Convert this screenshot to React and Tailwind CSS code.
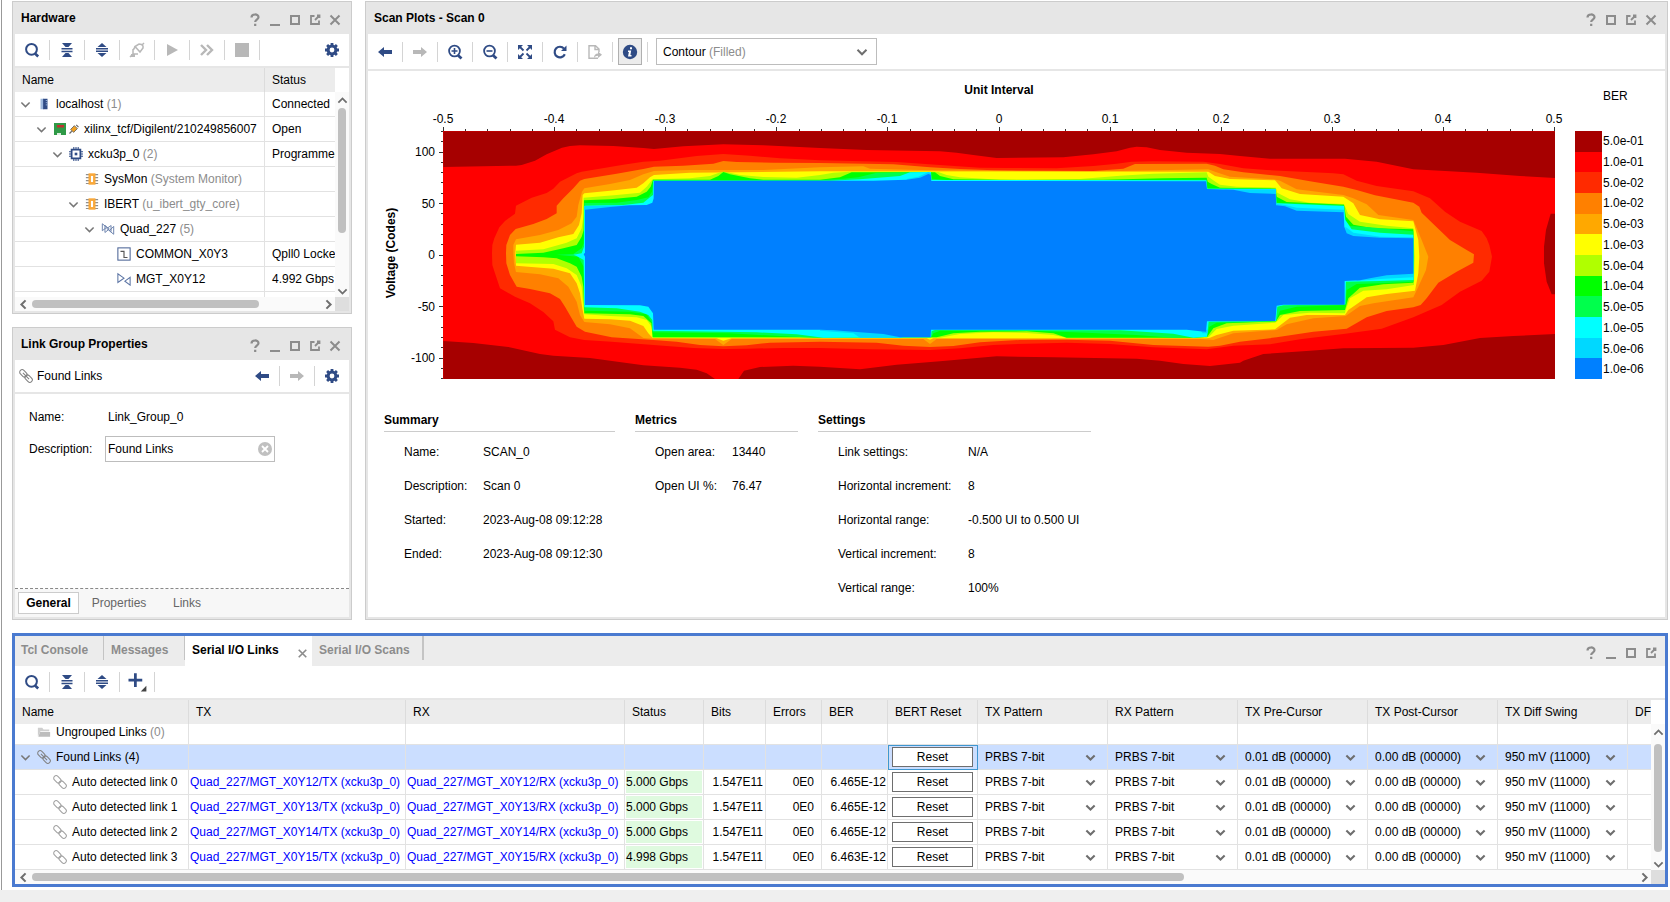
import React, { useState } from "react";

const NAVY = "#2f4b85";
const GREY = "#b8b8b8";

/* ---------- small icons ---------- */

const Svg = ({ size = 16, children, className = "" }) => (
  <svg width={size} height={size} viewBox="0 0 16 16" fill="none" className={`shrink-0 ${className}`} aria-hidden="true">
    {children}
  </svg>
);

const SearchIcon = () => (
  <Svg>
    <circle cx="7.5" cy="7.3" r="5.4" stroke={NAVY} strokeWidth="2" />
    <path d="M11 11.5l3.2 3" stroke={NAVY} strokeWidth="2.6" />
  </Svg>
);

const CollapseIcon = () => (
  <Svg>
    <path d="M3 1h10l-3.5 4h-3zM3 15h10l-3.5-4h-3zM2.5 6h11v1.400h-11zM2.5 8.800h11v1.400h-11z" fill={NAVY} />
  </Svg>
);

const ExpandIcon = () => (
  <Svg>
    <path d="M8 1l4.500 4h-9zM8 15l4.500-4h-9zM2 6h12v1.500H2zM2 8.500h12V10H2z" fill={NAVY} />
  </Svg>
);

const PlugIcon = () => (
  <Svg>
    <path d="M1 15l3-3M4 7v5h5M6 4.500l5 5.500 3-4V4l-1.500-1.500L10 2zM13 3l2-2M4.500 7.500L6 5" stroke={GREY} strokeWidth="1.500" />
    <path d="M2 12h4v3H2z" fill={GREY} />
  </Svg>
);

const PlayIcon = () => (
  <Svg>
    <path d="M3 2l11 6-11 6z" fill={GREY} />
  </Svg>
);

const FastForwardIcon = () => (
  <Svg>
    <path d="M2 3l5 5-5 5M8 3l5 5-5 5" stroke={GREY} strokeWidth="2.400" />
  </Svg>
);

const StopIcon = () => (
  <Svg>
    <path d="M1 1h14v14H1z" fill={GREY} />
  </Svg>
);

const GearIcon = () => (
  <Svg>
    <circle cx="8" cy="8" r="3.900" stroke={NAVY} strokeWidth="3" />
    <path
      d="M8 1v2.500M8 12.500V15M1 8h2.500M12.500 8H15M3.100 3.100l1.700 1.700M11.200 11.200l1.700 1.700M3.100 12.900l1.700-1.700M11.200 4.800l1.700-1.700"
      stroke={NAVY}
      strokeWidth="2.800"
    />
  </Svg>
);

const LeftArrowIcon = () => (
  <Svg>
    <path d="M1 8l6-5v3h8v4H7v3z" fill={NAVY} />
  </Svg>
);

const RightArrowIcon = () => (
  <Svg>
    <path d="M15 8L9 3v3H1v4h8v3z" fill={GREY} />
  </Svg>
);

const ZoomIcon = ({ plus }) => (
  <Svg>
    <circle cx="7.500" cy="7" r="5.400" stroke={NAVY} strokeWidth="1.800" />
    <path d="M11 11.300l3.500 3.200" stroke={NAVY} strokeWidth="2.800" />
    <path d={plus ? "M4.500 7h6M7.500 4v6" : "M4.500 7h6"} stroke={NAVY} strokeWidth="1.600" />
  </Svg>
);

const FitIcon = () => (
  <Svg>
    <path d="M1 1h5L1 6zM15 1v5l-5-5zM1 15v-5l5 5zM15 15h-5l5-5z" fill={NAVY} />
    <path d="M3 3l3.500 3.500M13 3L9.500 6.500M3 13l3.500-3.500M13 13L9.500 9.500" stroke={NAVY} strokeWidth="1.800" />
  </Svg>
);

const ReloadIcon = () => (
  <Svg>
    <path d="M12.800 10.200A5.300 5.300 0 1 1 12 4.600" stroke={NAVY} strokeWidth="2.200" />
    <path d="M14.500 1.500v5.500H9z" fill={NAVY} />
  </Svg>
);

const ExportIcon = () => (
  <Svg>
    <path d="M11 14.300H2V1.700h6.500L12 5v3M8 2v3.500h4" stroke={GREY} strokeWidth="1.400" />
    <path d="M7 14c0-3 1.500-4.500 4-4.500V7.500l4 3.200-4 3.300v-2.200c-1.800 0-3 .7-4 2.200z" fill={GREY} />
  </Svg>
);

const InfoIcon = () => (
  <Svg>
    <circle cx="8" cy="8" r="7.200" fill={NAVY} />
    <path d="M8 3.200h2v2H8zM6 6.500h3.200L8.400 11h1.100v1.500H6L6.900 8H6z" fill="#fff" />
  </Svg>
);

const PlusIcon = () => (
  <Svg size={20}>
    <path d="M6.700 1v11M1.200 6.500h11" stroke={NAVY} strokeWidth="2.200" />
    <path d="M15.500 11v4.500H11z" fill="#444" />
  </Svg>
);

const Chevron = ({ dir = "down", color = "#6e6e6e", size = 10, width = 2.4 }) => {
  const paths = {
    down: "M2 5l6 6 6-6",
    up: "M2 11l6-6 6 6",
    left: "M11 2L5 8l6 6",
    right: "M5 2l6 6-6 6",
  };
  return (
    <Svg size={size}>
      <path d={paths[dir]} stroke={color} strokeWidth={width} />
    </Svg>
  );
};

const LinkIcon = ({ bold }) => (
  <Svg size={14}>
    <g transform="rotate(45 8 8)" stroke={bold ? "#808080" : "#a0a0a0"} strokeWidth="1.200">
      <rect x="-1" y="5.200" width="9.500" height="5.600" rx="2.800" />
      <rect x="7.500" y="5.200" width="9.500" height="5.600" rx="2.800" />
      {bold && <path d="M3 8h10" />}
    </g>
  </Svg>
);

const FolderIcon = () => (
  <Svg size={14}>
    <path d="M1 13V3h5l1.500 2H14v2H4z" fill="#cfcfcf" />
    <path d="M3.500 8H15v5.500H1.500z" fill="#bdbdbd" />
  </Svg>
);

const ServerIcon = () => (
  <Svg size={14}>
    <path d="M4 2h4v12H4z" fill="#9db8dd" />
    <path d="M7 2h5v12H7z" fill="#2f4b85" />
    <path d="M10 4h2M10 6.500h2M10 9h2" stroke="#9db8dd" />
  </Svg>
);

const BoardIcon = () => (
  <span className="flex items-center">
    <Svg>
      <path d="M2 2h12v12H2z" fill="#2f9a47" />
      <path d="M5 4h7v2.500H5z" fill="#c23030" />
      <path d="M5 12h4v2H5z" fill="#dff0e2" />
    </Svg>
    <Svg size={12}>
      <path d="M3.500 8.500l5-5 4 4-5 5z" fill="#f0a020" stroke="#666" strokeWidth="1.200" />
      <path d="M2 14l3-3M11 2.500l3 3" stroke="#666" strokeWidth="1.600" />
    </Svg>
  </span>
);

const ChipIcon = () => (
  <Svg size={14}>
    <rect x="3" y="3" width="10" height="10" stroke={NAVY} strokeWidth="2" />
    <rect x="6.500" y="6.500" width="3" height="3" fill={NAVY} />
    <path
      d="M5.500 0v3M8 0v3M10.500 0v3M5.500 13v3M8 13v3M10.500 13v3M0 5.500h3M0 8h3M0 10.500h3M13 5.500h3M13 8h3M13 10.500h3"
      stroke={NAVY}
      strokeWidth="1.200"
    />
  </Svg>
);

const CoreIcon = () => (
  <Svg size={14}>
    <path d="M1 3h14M1 6.400h14M1 9.800h14M1 13.200h14" stroke="#8f8f8f" strokeWidth="1.300" />
    <path d="M4 1.500h8v13H4z" fill="#f9a83a" />
    <path d="M6.800 4.500h2.400v7H6.800z" fill="#fff" />
  </Svg>
);

const QuadIcon = () => (
  <Svg size={14}>
    <path d="M1.500 2v8l5-4zM4.500 4v8l5-4zM11.500 4v7l-5-3.500zM14.500 5v9l-5-4z" stroke="#6b82ad" strokeWidth="1.100" />
  </Svg>
);

const CommonIcon = () => (
  <Svg size={14}>
    <rect x="1" y="1" width="14" height="14" stroke="#4c6496" strokeWidth="1.200" />
    <path d="M4 5h4v7h4" stroke="#555" strokeWidth="1.300" />
  </Svg>
);

const GtIcon = () => (
  <Svg size={14}>
    <path d="M1 2v10l7-5zM15 6v9l-6-4.500z" stroke="#5b74a4" strokeWidth="1.200" />
  </Svg>
);

/* ---------- panel chrome ---------- */

const windowIcons = {
  Help: (
    <path d="M4.500 5.500C4.500 1.500 11.500 1.500 11.500 5.300c0 2.200-3.300 2.400-3.300 4.700M8.200 11.800V14" stroke="#8c8c8c" strokeWidth="2.200" />
  ),
  Minimize: <path d="M3 13h10" stroke="#8c8c8c" strokeWidth="2" />,
  Maximize: <path d="M4 4h8v8H4z" stroke="#8c8c8c" strokeWidth="2" />,
  Float: <path d="M7.500 4H4v8h8V8.500M8 8l4-4M10 3.500h2.500V6" stroke="#8c8c8c" strokeWidth="1.800" />,
  Close: <path d="M3.500 3.500l9 9M12.500 3.500l-9 9" stroke="#8c8c8c" strokeWidth="2" />,
};

const WindowButtons = ({ names }) => (
  <div className="flex items-center pr-1 pt-1">
    {names.map((name) => (
      <button key={name} type="button" aria-label={name} className="flex w-5 justify-center">
        <Svg>{windowIcons[name]}</Svg>
      </button>
    ))}
  </div>
);

const Panel = ({ title, buttons, className = "", children }) => (
  <section className={`flex flex-col border border-[#cccccc] bg-[#e6e6e6] px-0.5 pb-0.5 ${className}`}>
    <header className="flex h-8 shrink-0 items-center justify-between pl-1.5">
      <h2 className="font-bold">{title}</h2>
      <WindowButtons names={buttons} />
    </header>
    {children}
  </section>
);

const Sep = () => <span className="h-5 w-px shrink-0 bg-[#d4d4d4]" />;

const Tool = ({ label, children }) => (
  <button type="button" aria-label={label} className="flex w-[34px] shrink-0 items-center justify-center">
    {children}
  </button>
);

const Tools = ({ items }) =>
  items.map(([label, icon]) => (
    <React.Fragment key={label}>
      <Tool label={label}>{icon}</Tool>
      <Sep />
    </React.Fragment>
  ));

const HScroll = ({ thumb }) => (
  <div className="flex h-3.5 bg-[#fafafa]">
    <button type="button" aria-label="Scroll left" className="flex w-[17px] shrink-0 items-center justify-center">
      <Chevron dir="left" size={11} width={3} />
    </button>
    <div className="flex min-w-0 flex-1 items-center">
      <div className={`h-2 rounded-full bg-[#c0c0c0] ${thumb}`} />
    </div>
    <button type="button" aria-label="Scroll right" className="flex w-3.5 shrink-0 items-center justify-center">
      <Chevron dir="right" size={11} width={3} />
    </button>
    <div className="w-3.5 shrink-0 bg-[#dedede]" />
  </div>
);

const VScroll = ({ thumb }) => (
  <div className="flex w-3.5 shrink-0 flex-col items-center bg-white pt-6">
    <div className="flex w-full flex-1 flex-col items-center bg-[#fafafa]">
      <button type="button" aria-label="Scroll up" className="flex h-4 items-center">
        <Chevron dir="up" size={11} width={2.6} />
      </button>
      <div className="flex w-2 flex-1 flex-col">
        <div className={`w-2 rounded-full bg-[#c0c0c0] ${thumb}`} />
      </div>
      <button type="button" aria-label="Scroll down" className="flex h-3 items-center">
        <Chevron dir="down" size={11} width={2.6} />
      </button>
    </div>
  </div>
);

const indents = ["pl-[3px]", "pl-[19px]", "pl-[35px]", "pl-[51px]", "pl-[67px]", "pl-[83px]"];

const TreeCell = ({ level, open, icon, name, note, noteClass = "text-[#8c8c8c]" }) => (
  <div className={`flex items-center gap-1 ${indents[level]}`}>
    <span className="flex w-3.5 shrink-0 justify-center">{open && <Chevron color="#777" size={11} width={2.2} />}</span>
    <span className="flex min-w-4 shrink-0 justify-center">{icon}</span>
    <span>
      {name} {note && <span className={noteClass}>{note}</span>}
    </span>
  </div>
);

/* ---------- hardware ---------- */

const hardwareRows = [
  { level: 0, open: true, icon: <ServerIcon />, name: "localhost", note: "(1)", status: "Connected" },
  { level: 1, open: true, icon: <BoardIcon />, name: "xilinx_tcf/Digilent/210249856007", status: "Open" },
  { level: 2, open: true, icon: <ChipIcon />, name: "xcku3p_0", note: "(2)", status: "Programmed" },
  { level: 3, icon: <CoreIcon />, name: "SysMon", note: "(System Monitor)", status: "" },
  { level: 3, open: true, icon: <CoreIcon />, name: "IBERT", note: "(u_ibert_gty_core)", status: "" },
  { level: 4, open: true, icon: <QuadIcon />, name: "Quad_227", note: "(5)", status: "" },
  { level: 5, icon: <CommonIcon />, name: "COMMON_X0Y3", status: "Qpll0 Locked" },
  { level: 5, icon: <GtIcon />, name: "MGT_X0Y12", status: "4.992 Gbps" },
];

const HardwarePanel = () => (
  <Panel title="Hardware" buttons={["Help", "Minimize", "Maximize", "Float", "Close"]}>
    <div className="mb-0.5 flex h-8 items-center bg-white">
      <Tools
        items={[
          ["Search", <SearchIcon />],
          ["Collapse all", <CollapseIcon />],
          ["Expand all", <ExpandIcon />],
          ["Auto connect", <PlugIcon />],
          ["Run", <PlayIcon />],
          ["Run immediate", <FastForwardIcon />],
          ["Stop", <StopIcon />],
        ]}
      />
      <div className="ml-auto flex">
        <Tool label="Settings">
          <GearIcon />
        </Tool>
      </div>
    </div>
    <div className="flex h-[229px] bg-white">
      <div className="min-w-0 flex-1 overflow-hidden">
        <table className="w-full table-fixed border-separate border-spacing-0 whitespace-nowrap">
          <thead>
            <tr className="h-6 bg-[#ececec] text-left">
              <th className="w-[250px] border-r border-[#dcdcdc] pl-[7px] font-normal">Name</th>
              <th className="pl-[7px] font-normal">Status</th>
            </tr>
          </thead>
          <tbody>
            {hardwareRows.map((row) => (
              <tr key={row.name} className="h-[25px]">
                <td className="overflow-hidden border-r border-b border-[#e2e2e2] p-0">
                  <TreeCell {...row} />
                </td>
                <td className="overflow-hidden border-b border-[#e2e2e2] p-0 pl-[7px]">{row.status}</td>
              </tr>
            ))}
            <tr className="h-[25px]">
              <td className="border-r border-[#e2e2e2]" />
              <td />
            </tr>
          </tbody>
        </table>
      </div>
      <VScroll thumb="h-[125px]" />
    </div>
    <HScroll thumb="w-[227px]" />
  </Panel>
);

/* ---------- link group properties ---------- */

const PropertiesPanel = () => {
  const [description, setDescription] = useState("Found Links");

  return (
    <Panel title="Link Group Properties" buttons={["Help", "Minimize", "Maximize", "Float", "Close"]} className="flex-1">
      <div className="mb-0.5 flex h-8 shrink-0 items-center bg-white">
        <div className="flex flex-1 items-center gap-1 pl-1">
          <LinkIcon bold />
          <span>Found Links</span>
        </div>
        <Tools items={[["Back", <LeftArrowIcon />], ["Forward", <RightArrowIcon />]]} />
        <Tool label="Settings">
          <GearIcon />
        </Tool>
      </div>
      <div className="flex flex-1 flex-col gap-2 border-b border-dashed border-[#888] bg-white px-3.5 pt-3">
        <div className="flex h-[22px] items-center">
          <span className="w-[79px]">Name:</span>
          <span>Link_Group_0</span>
        </div>
        <div className="flex items-center">
          <label htmlFor="description" className="w-[76px]">
            Description:
          </label>
          <div className="flex h-[26px] w-[170px] items-center border border-[#bdbdbd] pr-px pl-0.5">
            <input
              id="description"
              type="text"
              value={description}
              onChange={(e) => setDescription(e.target.value)}
              className="min-w-0 flex-1 outline-none"
            />
            <button type="button" aria-label="Clear description" onClick={() => setDescription("")}>
              <Svg>
                <circle cx="8" cy="8" r="7" fill="#c0c0c0" />
                <path d="M5 5l6 6M11 5l-6 6" stroke="#fff" strokeWidth="1.800" />
              </Svg>
            </button>
          </div>
        </div>
      </div>
      <div className="flex h-7 shrink-0 items-center bg-[#f7f7f7] pl-[3px] text-[#666]">
        <button type="button" className="h-[22px] w-[61px] border border-[#cccccc] bg-white font-bold text-black">
          General
        </button>
        <button type="button" className="w-20">
          Properties
        </button>
        <button type="button" className="w-14">
          Links
        </button>
      </div>
    </Panel>
  );
};

/* ---------- eye scan ---------- */

// Contour outlines, low to high confidence, drawn in thirds of a pixel.
const contours = [
  {
    fill: "#a60000",
    points: [
      "40,34 40,141 258,137 275,135 315,122 350,103 396,83 420,78 450,76 550,78 640,84 672,87 760,79 880,73 1000,76 1170,84 1310,90 1530,94 1580,98 1630,105 1700,114 1900,112 1990,103 2060,94 2100,83 2120,80 2150,82 2190,90 2270,98 2370,102 2430,108 2520,116 2745,116 2840,125 2950,148 3140,158 3270,168 3375,174 3375,34",
      "40,663 130,669 235,681 330,702 370,707 480,714 640,736 750,743 800,749 830,760 855,777 40,777",
      "925,777 942,752 990,741 1090,737 1170,740 1290,748 1400,734 1530,724 1700,709 1870,712 2120,716 2190,722 2260,732 2340,738 2430,728 2440,722 2500,702 2640,692 2740,685 2950,683 3040,675 3150,654 3250,648 3375,642 3375,777",
      "3375,281 3362,281 3348,330 3342,380 3342,430 3350,485 3365,523 3375,523",
    ],
  },
  {
    fill: "#ff2a00",
    points: [
      "186,400 187,375 193,355 208,322 225,303 255,281 258,257 305,233 350,219 370,206 390,185 440,160 455,155 580,134 640,125 690,122 800,108 880,102 960,107 1050,115 1170,121 1400,126 1540,136 1650,143 1730,144 1880,145 1990,138 2060,131 2105,125 2170,124 2320,125 2370,132 2440,145 2510,150 2710,160 2740,163 2780,182 2840,198 2950,214 3000,235 3045,275 3090,305 3155,333 3170,355 3178,375 3186,410 3178,455 3155,482 3090,515 3035,555 2950,592 2855,626 2740,642 2610,658 2520,673 2410,677 2330,688 2170,682 2040,672 1910,668 1790,671 1690,675 1590,685 1500,690 1320,688 1170,684 1060,684 950,686 880,687 790,684 700,677 545,665 463,660 420,652 375,629 370,604 340,576 300,550 255,530 210,505 195,460 187,435",
    ],
  },
  {
    fill: "#ff8000",
    points: [
      "228,400 229,375 240,345 257,327 310,312 350,297 380,280 380,257 400,235 430,205 450,182 463,177 560,161 640,147 672,140 760,137 850,131 880,123 920,126 1030,128 1170,129 1390,133 1500,142 1590,147 1690,151 1990,153 2080,146 2115,132 2330,131 2355,137 2380,148 2440,157 2550,168 2640,184 2740,200 2780,210 2835,226 2950,248 2968,260 2975,278 3010,312 3060,360 3110,390 3132,403 3130,428 3080,455 3025,488 2990,535 2972,555 2950,562 2870,573 2810,592 2750,626 2650,635 2540,652 2430,665 2370,677 2335,680 2170,675 2040,662 1910,659 1770,660 1650,667 1570,678 1500,681 1420,677 1340,668 1170,665 1020,668 950,676 880,679 810,675 740,665 670,660 545,652 465,635 440,620 425,595 405,560 390,537 360,520 300,507 260,500 240,465 229,430",
    ],
  },
  {
    fill: "#ffa800",
    points: [
      "250,400 250,375 258,358 330,345 385,330 425,310 440,290 445,255 456,215 463,205 540,192 600,180 640,163 672,153 780,150 1000,150 1170,142 1300,139 1320,146 1500,151 1970,155 2110,152 2335,148 2355,155 2400,170 2530,178 2550,182 2600,208 2740,225 2770,235 2810,253 2845,285 2950,300 2975,360 2995,410 2988,450 2965,500 2950,532 2830,550 2790,558 2747,588 2650,595 2570,613 2540,630 2410,640 2350,660 2310,657 1520,657 1500,672 1480,657 905,657 880,675 855,657 668,656 640,654 600,625 540,613 463,606 450,585 440,545 415,500 385,475 330,463 258,456 252,430",
    ],
  },
  {
    fill: "#ffff00",
    points: [
      "256,400 258,374 330,368 385,352 430,342 447,315 455,280 458,225 463,220 540,212 620,203 640,190 660,172 672,165 780,158 1170,154 2335,155 2355,168 2400,177 2535,181 2555,205 2610,222 2740,230 2770,250 2790,285 2850,298 2950,304 2965,360 2968,410 2965,460 2955,512 2870,522 2810,532 2755,570 2745,585 2630,585 2580,593 2535,628 2410,632 2360,645 2340,653 2330,655 1510,655 1500,659 1490,655 905,655 880,662 860,655 668,654 655,640 640,618 600,602 540,598 463,596 457,565 450,520 440,490 420,460 370,446 258,437",
    ],
  },
  {
    fill: "#b0ff00",
    points: [
      "258,392 340,388 410,368 440,355 455,325 460,290 461,233 560,225 630,218 650,200 668,178 780,175 840,168 875,155 885,155 930,165 1000,171 1100,173 1170,165 1210,158 1260,155 1500,155 1525,156 1550,165 1590,172 1710,179 1950,177 2070,167 2170,161 2330,157 2335,170 2353,183 2370,194 2420,200 2538,203 2542,218 2580,238 2640,248 2742,252 2755,282 2790,305 2870,317 2950,325 2954,410 2952,495 2870,508 2800,512 2760,535 2747,570 2745,580 2640,578 2560,585 2540,605 2535,608 2410,617 2360,627 2337,650 2330,653 1910,653 1870,645 1790,639 1690,637 1590,642 1530,653 668,653 665,620 650,600 620,592 540,588 463,583 458,540 455,500 440,465 410,445 370,432 258,430",
    ],
  },
  {
    fill: "#00ff00",
    points: [
      "258,402 340,398 400,385 440,375 455,350 461,330 462,241 540,238 620,230 650,215 662,200 669,179 840,179 865,168 880,156 900,163 960,175 1000,179 1170,179 1230,172 1265,157 1515,157 1530,168 1570,178 1770,180 2020,179 2200,175 2330,173 2333,185 2345,192 2370,203 2536,206 2540,230 2570,246 2742,254 2748,290 2770,314 2830,325 2950,328 2952,410 2950,488 2860,493 2790,503 2755,535 2745,570 2610,573 2550,585 2538,604 2390,610 2350,625 2332,650 2300,653 1910,653 1870,640 1790,634 1650,635 1570,640 1520,652 668,652 664,610 640,588 600,583 463,580 460,500 455,470 440,440 420,430 380,415 340,412 258,409",
    ],
  },
  {
    fill: "#00ff4c",
    points: [
      "380,404 430,402 455,385 461,370 463,249 560,248 620,240 655,232 666,215 670,181 1170,181 1240,176 1285,172 1340,158 1503,156 1506,176 1560,181 2020,181 2330,179 2332,205 2537,206 2541,248 2742,256 2746,300 2760,318 2820,322 2950,334 2951,485 2850,490 2780,492 2750,510 2746,555 2600,560 2550,572 2538,604 2360,608 2338,620 2331,650 2230,653 2120,645 1970,638 1810,632 1530,632 1510,640 1504,652 1150,653 1050,648 900,640 668,637 667,610 650,583 600,575 463,572 461,440 445,410",
    ],
  },
  {
    fill: "#00ffff",
    points: [
      "430,404 455,400 462,380 463,257 580,255 640,248 660,232 669,225 670,182 1200,182 1290,178 1410,168 1440,157 1503,156 1504,180 2329,181 2332,206 2537,207 2539,250 2742,258 2746,300 2765,328 2850,338 2950,344 2951,480 2850,483 2748,485 2746,553 2560,556 2542,560 2538,603 2336,605 2331,650 2290,653 2230,641 2150,636 2070,631 1515,630 1505,634 1503,652 1180,653 1100,643 980,637 668,632 667,600 655,585 630,575 560,565 463,562 461,420 440,408",
    ],
  },
  {
    fill: "#00d8ff",
    points: [
      "463,258 600,256 600,270 463,271",
      "1430,177 1465,170 1495,156 1503,160 1503,184 1430,184",
      "2380,208 2538,208 2538,224 2440,224",
      "2541,252 2565,255 2600,263 2742,269 2742,279 2590,279 2541,260",
      "2746,320 2770,338 2850,350 2950,352 2950,360 2746,360",
      "2950,455 2950,472 2850,477 2780,483 2780,455",
      "1170,629 1280,634 1360,640 1420,653 1290,653 1270,640 1170,632",
      "2310,629 2333,629 2333,640 2318,640",
    ],
  },
  {
    fill: "#0080ff",
    points: [
      "465,269 540,261 600,256 650,255 667,248 671,235 672,183 1330,182 1430,179 1470,173 1495,162 1502,164 1504,183 2328,184 2331,207 2410,209 2460,219 2537,222 2539,256 2565,259 2600,272 2741,277 2743,320 2750,340 2770,348 2850,353 2950,355 2950,461 2870,466 2820,475 2790,481 2744,483 2744,554 2560,554 2540,557 2536,603 2331,604 2328,635 2310,634 2270,629 1503,629 1502,652 1410,652 1360,642 1280,636 1210,631 1170,629 671,629 669,580 655,560 630,556 465,555 465,410 461,403 465,398",
    ],
  },
];

const legend = [
  ["5.0e-01", "#a60000"],
  ["1.0e-01", "#ff0000"],
  ["5.0e-02", "#ff2a00"],
  ["1.0e-02", "#ff8000"],
  ["5.0e-03", "#ffa800"],
  ["1.0e-03", "#ffff00"],
  ["5.0e-04", "#b0ff00"],
  ["1.0e-04", "#00ff00"],
  ["5.0e-05", "#00ff4c"],
  ["1.0e-05", "#00ffff"],
  ["5.0e-06", "#00d8ff"],
  ["1.0e-06", "#0080ff"],
];

const xTicks = Array.from({ length: 51 }, (_, i) => i);
const yTicks = Array.from({ length: 25 }, (_, i) => 120 - i * 10);
const xLabels = ["-0.5", "-0.4", "-0.3", "-0.2", "-0.1", "0", "0.1", "0.2", "0.3", "0.4", "0.5"];

const EyeChart = () => (
  <svg viewBox="368 71 1297 320" className="h-auto w-full" fontSize="12" fill="#000" role="img" aria-label="Eye scan contour">
    <text x="999" y="94" textAnchor="middle" fontWeight="bold">
      Unit Interval
    </text>
    {xLabels.map((label, i) => (
      <text key={label} x={Math.round(443 + i * 111.1)} y="123" textAnchor="middle">
        {label}
      </text>
    ))}
    <path
      d={xTicks.map((i) => `M${Math.round(443 + i * 22.22) + 0.5} 131v${i % 5 === 0 ? -4 : -2}`).join("")}
      stroke="#333"
    />
    <path
      d={yTicks.map((v) => `M443 ${Math.round(254.5 - v * 1.03) + 0.5}h${v % 50 === 0 ? -4 : -2}`).join("")}
      stroke="#333"
    />
    {[100, 50, 0, -50, -100].map((v) => (
      <text key={v} x="435" y={Math.round(259 - v * 1.03)} textAnchor="end">
        {v}
      </text>
    ))}
    <text transform="translate(395 253) rotate(-90)" textAnchor="middle" fontWeight="bold">
      Voltage (Codes)
    </text>

    <rect x="443" y="131" width="1112" height="248" fill="#ff0000" />
    <g transform="translate(430 120) scale(0.33333)">
      {contours.map((c) => c.points.map((p, i) => <polygon key={c.fill + i} points={p} fill={c.fill} />))}
    </g>

    <text x="1603" y="100">
      BER
    </text>
    {legend.map(([label, color], i) => (
      <g key={label}>
        <rect x="1575" y={Math.round(131 + i * 20.67)} width="27" height="21" fill={color} />
        <text x="1603" y={Math.round(145 + i * 20.75)}>
          {label}
        </text>
      </g>
    ))}
  </svg>
);

const Details = ({ title, rows, className, labelClass }) => (
  <section className={className}>
    <h3 className="border-b border-[#cccccc] pb-[3px] font-bold">{title}</h3>
    <dl className="flex flex-col pt-[3px] pl-5">
      {rows.map(([label, value]) => (
        <div key={label} className="flex h-[34px] items-center">
          <dt className={labelClass}>{label}</dt>
          <dd>{value}</dd>
        </div>
      ))}
    </dl>
  </section>
);

const ScanPanel = () => {
  const [info, setInfo] = useState(true);
  const [plotType, setPlotType] = useState("Filled");

  return (
    <Panel title="Scan Plots - Scan 0" buttons={["Help", "Maximize", "Float", "Close"]} className="min-w-0 flex-1">
      <div className="mb-0.5 flex h-[35px] items-center bg-white">
        <Tools
          items={[
            ["Back", <LeftArrowIcon />],
            ["Forward", <RightArrowIcon />],
            ["Zoom in", <ZoomIcon plus />],
            ["Zoom out", <ZoomIcon />],
            ["Zoom fit", <FitIcon />],
            ["Reload", <ReloadIcon />],
            ["Export", <ExportIcon />],
          ]}
        />
        <div className="flex w-[34px] justify-center">
          <button
            type="button"
            aria-label="Scan information"
            aria-pressed={info}
            onClick={() => setInfo(!info)}
            className="flex h-[27px] w-6 items-center justify-center border border-[#b0b0b0] bg-[#ececec]"
          >
            <InfoIcon />
          </button>
        </div>
        <Sep />
        <div className="ml-2 grid h-[27px] w-[221px] items-center border border-[#bdbdbd]">
          <select
            aria-label="Plot type"
            value={plotType}
            onChange={(e) => setPlotType(e.target.value)}
            className="col-start-1 row-start-1 h-full w-full appearance-none text-transparent outline-none"
          >
            <option value="Filled">Contour (Filled)</option>
            <option value="Lines">Contour (Lines)</option>
          </select>
          <span className="pointer-events-none col-start-1 row-start-1 flex items-center justify-between pr-2 pl-1.5" aria-hidden="true">
            <span>
              Contour <span className="text-[#8c8c8c]">({plotType})</span>
            </span>
            <Chevron size={12} width={2.6} />
          </span>
        </div>
      </div>
      <div className="flex-1 bg-white pb-3">
        <EyeChart />
        {info && (
          <div className="flex gap-5 pt-[21px] pl-4">
            <Details
              title="Summary"
              className="w-[231px]"
              labelClass="w-[79px]"
              rows={[
                ["Name:", "SCAN_0"],
                ["Description:", "Scan 0"],
                ["Started:", "2023-Aug-08 09:12:28"],
                ["Ended:", "2023-Aug-08 09:12:30"],
              ]}
            />
            <Details
              title="Metrics"
              className="w-[163px]"
              labelClass="w-[77px]"
              rows={[
                ["Open area:", "13440"],
                ["Open UI %:", "76.47"],
              ]}
            />
            <Details
              title="Settings"
              className="w-[273px]"
              labelClass="w-[130px]"
              rows={[
                ["Link settings:", "N/A"],
                ["Horizontal increment:", "8"],
                ["Horizontal range:", "-0.500 UI to 0.500 UI"],
                ["Vertical increment:", "8"],
                ["Vertical range:", "100%"],
              ]}
            />
          </div>
        )}
      </div>
    </Panel>
  );
};

/* ---------- serial i/o links ---------- */

const links = [
  { id: 0, port: "X0Y12", status: "5.000 Gbps", bits: "1.547E11", errors: "0E0", ber: "6.465E-12" },
  { id: 1, port: "X0Y13", status: "5.000 Gbps", bits: "1.547E11", errors: "0E0", ber: "6.465E-12" },
  { id: 2, port: "X0Y14", status: "5.000 Gbps", bits: "1.547E11", errors: "0E0", ber: "6.465E-12" },
  { id: 3, port: "X0Y15", status: "4.998 Gbps", bits: "1.547E11", errors: "0E0", ber: "6.463E-12" },
];

const columns = [
  ["Name", "w-[174px]"],
  ["TX", "w-[217px]"],
  ["RX", "w-[219px]"],
  ["Status", "w-[79px]"],
  ["Bits", "w-[62px]"],
  ["Errors", "w-[56px]"],
  ["BER", "w-[66px]"],
  ["BERT Reset", "w-[90px]"],
  ["TX Pattern", "w-[130px]"],
  ["RX Pattern", "w-[130px]"],
  ["TX Pre-Cursor", "w-[130px]"],
  ["TX Post-Cursor", "w-[130px]"],
  ["TX Diff Swing", "w-[130px]"],
  ["DFE Enabled", ""],
];

const settings = [
  ["TX Pattern", "PRBS 7-bit"],
  ["RX Pattern", "PRBS 7-bit"],
  ["TX Pre-Cursor", "0.01 dB (00000)"],
  ["TX Post-Cursor", "0.00 dB (00000)"],
  ["TX Diff Swing", "950 mV (11000)"],
];

const Cell = ({ className = "", children }) => (
  <td className={`overflow-hidden border-r border-b border-[#e2e2e2] p-0 ${className}`}>{children}</td>
);

const SettingCells = ({ row }) =>
  settings.map(([name, value]) => (
    <Cell key={name}>
      <div className="flex items-center pr-[11px] pl-[7px]">
        <select aria-label={`${name}, ${row}`} className="min-w-0 flex-1 appearance-none outline-none">
          <option>{value}</option>
        </select>
        <Chevron size={11} width={3} />
      </div>
    </Cell>
  ));

const ResetButton = () => (
  <button type="button" className="mx-auto block h-5 w-[81px] border border-[#6e6e6e] bg-white leading-4">
    Reset
  </button>
);

const LinksTable = () => (
  <table className="w-full table-fixed border-separate border-spacing-0 whitespace-nowrap">
    <thead>
      <tr className="h-6 bg-[#ececec] text-left">
        {columns.map(([name, width]) => (
          <th key={name} className={`overflow-hidden border-r border-[#dcdcdc] p-0 pl-[7px] font-normal last:border-r-0 ${width}`}>
            {name}
          </th>
        ))}
      </tr>
    </thead>
    <tbody>
      <tr className="h-[21px]">
        <Cell className="pb-1">
          <TreeCell level={0} icon={<FolderIcon />} name="Ungrouped Links" note="(0)" />
        </Cell>
        {columns.slice(1).map(([name]) => (
          <Cell key={name} className="last:border-r-0" />
        ))}
      </tr>
      <tr className="h-[25px] bg-[#cbdeff]">
        <Cell>
          <TreeCell level={0} open icon={<LinkIcon bold />} name="Found Links" note="(4)" noteClass="" />
        </Cell>
        {columns.slice(1, 7).map(([name]) => (
          <Cell key={name} />
        ))}
        <Cell className="outline -outline-offset-1 outline-[#3f97d0]">
          <ResetButton />
        </Cell>
        <SettingCells row="Found Links" />
        <Cell className="last:border-r-0" />
      </tr>
      {links.map((link) => (
        <tr key={link.id} className="h-[25px]">
          <Cell>
            <TreeCell level={1} icon={<LinkIcon />} name={`Auto detected link ${link.id}`} />
          </Cell>
          <Cell className="pl-px">
            <a href="#tx" className="text-[#0000ff]">
              Quad_227/MGT_{link.port}/TX (xcku3p_0)
            </a>
          </Cell>
          <Cell className="pl-px">
            <a href="#rx" className="text-[#0000ff]">
              Quad_227/MGT_{link.port}/RX (xcku3p_0)
            </a>
          </Cell>
          <Cell>
            <div className="m-px flex h-[22px] items-center bg-[#dffadf]">{link.status}</div>
          </Cell>
          <Cell className="pr-0.5 text-right">{link.bits}</Cell>
          <Cell className="pr-[7px] text-right">{link.errors}</Cell>
          <Cell className="pr-px text-right">{link.ber}</Cell>
          <Cell>
            <ResetButton />
          </Cell>
          <SettingCells row={`link ${link.id}`} />
          <Cell className="last:border-r-0" />
        </tr>
      ))}
    </tbody>
  </table>
);

const LinksPanel = () => (
  <section className="border-[3px] border-[#4a7ad0] bg-white">
    <div className="flex h-[30px] justify-between bg-[#ececec] font-bold text-[#8c8c8c]">
      <div className="flex">
        <button type="button" className="mb-1.5 w-[89px] border-r border-[#c4c4c4] pt-[3px] pl-1.5 text-left">
          Tcl Console
        </button>
        <button type="button" className="mb-1.5 w-[81px] border-r border-[#c4c4c4] pt-[3px] pl-[7px] text-left">
          Messages
        </button>
        <div className="flex w-[127px] items-center justify-between bg-white pr-1 pl-[7px]">
          <button type="button" className="pb-0.5 text-black">
            Serial I/O Links
          </button>
          <button type="button" aria-label="Close tab" className="pt-1">
            <Svg size={11}>
              <path d="M2.500 2.500l11 11M13.500 2.500l-11 11" stroke="#8c8c8c" strokeWidth="2.400" />
            </Svg>
          </button>
        </div>
        <button type="button" className="mb-1.5 w-[112px] border-r-2 border-[#c4c4c4] pt-[3px] pl-[7px] text-left">
          Serial I/O Scans
        </button>
      </div>
      <WindowButtons names={["Help", "Minimize", "Maximize", "Float"]} />
    </div>
    <div className="flex h-8 items-center">
      <Tools
        items={[
          ["Search", <SearchIcon />],
          ["Collapse all", <CollapseIcon />],
          ["Expand all", <ExpandIcon />],
          ["Add", <PlusIcon />],
        ]}
      />
    </div>
    <div className="flex border-t-2 border-[#e6e6e6]">
      <div className="min-w-0 flex-1">
        <LinksTable />
      </div>
      <VScroll thumb="mt-1 h-[108px]" />
    </div>
    <HScroll thumb="w-[1152px]" />
  </section>
);

export default function App() {
  return (
    <div className="flex min-h-screen flex-col bg-[#efefef] font-['Liberation_Sans',Arial,sans-serif] text-[12px] leading-4 text-black">
      <main className="bg-white pl-px">
        <div className="flex flex-col gap-[13px] border-l border-[#999] pt-px pr-0.5 pb-[3px] pl-2.5">
          <div className="flex gap-[13px]">
            <div className="flex w-[340px] shrink-0 flex-col gap-[13px]">
              <HardwarePanel />
              <PropertiesPanel />
            </div>
            <ScanPanel />
          </div>
          <LinksPanel />
        </div>
      </main>
    </div>
  );
}
